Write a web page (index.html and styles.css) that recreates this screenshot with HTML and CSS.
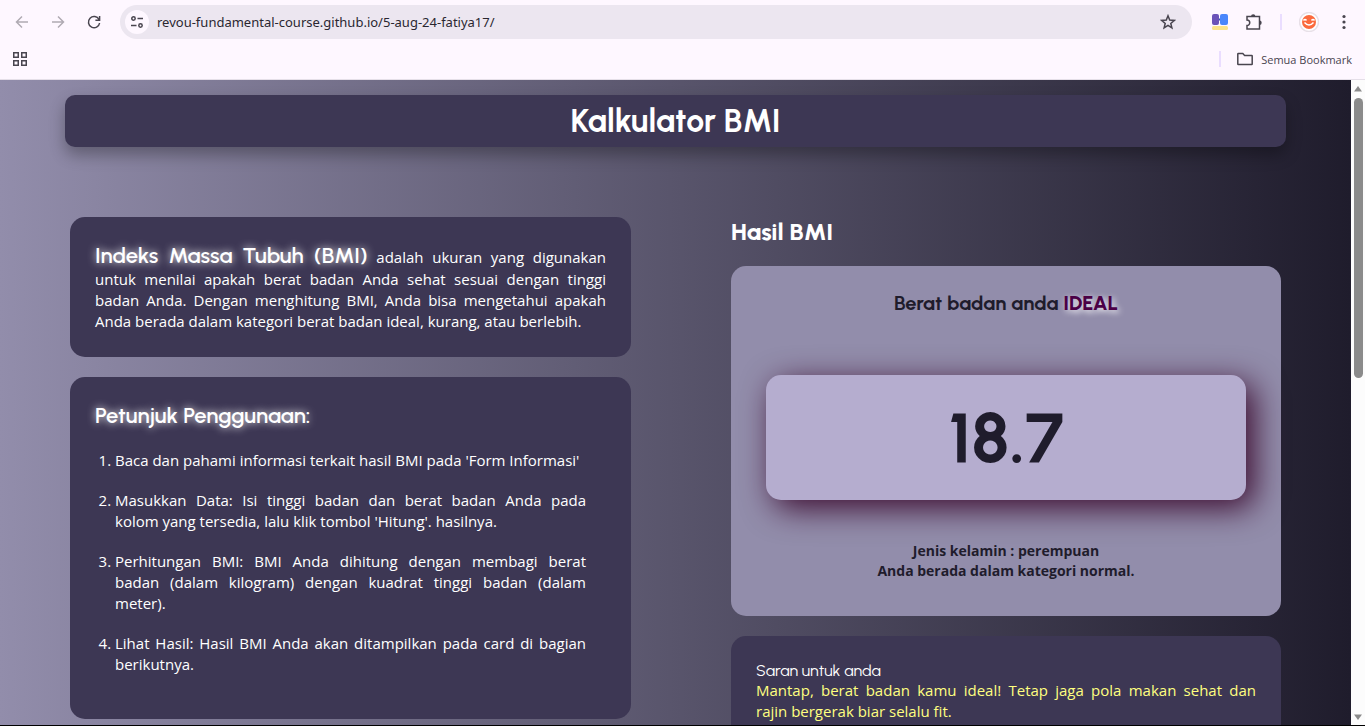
FILE: index.html
```html
<!DOCTYPE html>
<html lang="id">
<head>
    <meta charset="UTF-8">
    <meta name="viewport" content="width=device-width, initial-scale=1.0">
    <title>Kalkulator BMI</title>
    <link rel="stylesheet" href="styles.css">
</head>
<body>
<!-- browser bar -->
<div class="browser">
    <div class="toolbar">
        <button class="nav-btn off" aria-label="Kembali">
            <svg viewBox="0 0 16 16" width="16" height="16"><path d="M14 8H3M8 2.500L2.500 8L8 13.500"/></svg>
        </button>
        <button class="nav-btn off" aria-label="Maju">
            <svg viewBox="0 0 16 16" width="16" height="16"><path d="M2 8H13M8 2.500L13.500 8L8 13.500"/></svg>
        </button>
        <button class="nav-btn" aria-label="Muat ulang">
            <svg viewBox="0 0 16 16" width="16" height="16"><path d="M13 5.500A5.600 5.600 0 1 0 13.600 9M13.600 2V6.200H9.400"/></svg>
        </button>
        <div class="address">
            <button class="site-btn" aria-label="Info situs">
                <svg viewBox="0 0 16 16" width="16" height="16"><circle cx="4.500" cy="4.500" r="1.700"/><path d="M8.500 4.500H14M2 11.500H7.500"/><circle cx="11.500" cy="11.500" r="1.700"/></svg>
            </button>
            <input class="url" type="text" aria-label="Alamat" value="revou-fundamental-course.github.io/5-aug-24-fatiya17/">
            <button class="star-btn" aria-label="Bookmark">
                <svg viewBox="0 0 16 16" width="16" height="16"><path d="M8 1.800L9.700 6.100L14.300 6.400L10.800 9.400L11.900 13.900L8 11.400L4.100 13.900L5.200 9.400L1.700 6.400L6.300 6.100Z"/></svg>
            </button>
        </div>
        <div class="tools">
            <button class="tool-btn" aria-label="Ekstensi 1">
                <svg class="plain" viewBox="0 0 16 16" width="16" height="16"><rect y="12" width="16" height="4" rx="1.500" fill="#fbe38a"/><path d="M6 4.500H10V6.500H6Z" fill="#3b56a8"/><rect width="7" height="11" rx="2" fill="#6b53b8"/><rect x="8" width="8" height="11" rx="2" fill="#4a86fb"/></svg>
            </button>
            <button class="tool-btn" aria-label="Ekstensi">
                <svg viewBox="0 0 18 18" width="18" height="18"><path d="M2 3.500H14.500V16H2V12.500A2.600 2.600 0 0 0 2 7Z"/><path class="fill" d="M6 3.500a2.200 2.200 0 0 1 4.400 0zM14.500 7.500a2.200 2.200 0 0 1 0 4.400z"/></svg>
            </button>
            <span class="split"></span>
            <button class="tool-btn" aria-label="Profil">
                <svg class="plain" viewBox="0 0 20 20" width="20" height="20"><circle cx="10" cy="10" r="9.500" fill="#fff" stroke="#e8e0e8"/><circle cx="10" cy="10" r="7" fill="#fb6a3d"/><path d="M4.500 8.500Q6 6.500 7.500 8.500M12.500 8.500Q14 6.500 15.500 8.500M5.500 10.500Q10 15.500 14.500 10.500" fill="none" stroke="#fff"/></svg>
            </button>
            <button class="tool-btn" aria-label="Menu">
                <svg class="plain" viewBox="0 0 16 16" width="16" height="16"><g fill="#49454f"><circle cx="8" cy="2.500" r="1.600"/><circle cx="8" cy="8" r="1.600"/><circle cx="8" cy="13.500" r="1.600"/></g></svg>
            </button>
        </div>
    </div>
    <div class="bookmarks">
        <button class="tool-btn" aria-label="Aplikasi">
            <svg viewBox="0 0 16 16" width="16" height="16"><path d="M1.750 1.750H6.250V6.250H1.750ZM9.750 1.750H14.250V6.250H9.750ZM1.750 9.750H6.250V14.250H1.750ZM9.750 9.750H14.250V14.250H9.750Z"/></svg>
        </button>
        <div class="all-bookmarks">
            <span class="split"></span>
            <button class="folder-btn">
                <svg viewBox="0 0 18 16" width="18" height="16"><path d="M1.800 13V3Q1.800 2.500 2.300 2.500H6.800L8.600 4.400H15.700Q16.200 4.400 16.200 4.900V13Q16.200 13.500 15.700 13.500H2.300Q1.800 13.500 1.800 13Z"/></svg>
                Semua Bookmark
            </button>
        </div>
    </div>
</div>
<!-- browser bar -->

<div class="window">
    <div class="page">
        <header class="header">
            <h1>Kalkulator BMI</h1>
        </header>

        <main class="container">
            <section class="info">
                <div class="card">
                    <p><span class="glow">Indeks Massa Tubuh (BMI)</span> adalah ukuran yang digunakan untuk menilai apakah berat badan Anda sehat sesuai dengan tinggi badan Anda. Dengan menghitung BMI, Anda bisa mengetahui apakah Anda berada dalam kategori berat badan ideal, kurang, atau berlebih.</p>
                </div>
                <div class="card">
                    <h2 class="glow">Petunjuk Penggunaan:</h2>
                    <ol class="steps">
                        <li>Baca dan pahami informasi terkait hasil BMI pada 'Form Informasi'</li>
                        <li>Masukkan Data: Isi tinggi badan dan berat badan Anda pada kolom&nbsp;yang tersedia, lalu klik tombol 'Hitung'. hasilnya.</li>
                        <li>Perhitungan BMI: BMI Anda dihitung dengan membagi berat badan&nbsp;(dalam kilogram) dengan kuadrat tinggi badan (dalam meter).</li>
                        <li>Lihat Hasil: Hasil BMI Anda akan ditampilkan pada card di bagian berikutnya.</li>
                    </ol>
                </div>
            </section>

            <section class="result">
                <h2 class="result-title">Hasil BMI</h2>
                <div class="result-card">
                    <h3>Berat badan anda <span class="status">IDEAL</span></h3>
                    <div class="score">18.7</div>
                    <p class="detail">Jenis kelamin : perempuan<br>Anda berada dalam kategori normal.</p>
                </div>
                <div class="card">
                    <h4>Saran untuk anda</h4>
                    <p class="advice">Mantap, berat badan kamu ideal! Tetap jaga pola makan sehat dan rajin bergerak biar selalu fit.</p>
                </div>
            </section>
        </main>
    </div>

    <div class="scrollbar">
        <svg viewBox="0 0 10 8" width="10" height="8"><path d="M5 1L9 6.500H1Z"/></svg>
        <div class="thumb"></div>
        <svg class="down" viewBox="0 0 10 8" width="10" height="8"><path d="M5 7L9 1.500H1Z"/></svg>
    </div>
</div>
</body>
</html>
```
FILE: styles.css
```css
* {
    padding: 0;
    margin: 0;
    box-sizing: border-box;
}

body {
    display: flex;
    flex-direction: column;
    height: 100vh;
    overflow: hidden;
    font-family: "Segoe UI", "Open Sans", sans-serif;
    font-size: 15px;
    line-height: 21px;
    color: white;
}

h1, h2, h3, h4, .glow, .score {
    font-family: Urbanist, Lato, sans-serif;
}

button {
    display: flex;
    align-items: center;
    justify-content: center;
    border: 0;
    background: none;
    font: inherit;
    color: #49454f;
}

/* browser bar */
.browser {
    flex: none;
    height: 80px;
    background: #fef7ff;
    border-bottom: 1px solid #e5dfe8;
}

.browser svg {
    fill: none;
    stroke: #49454f;
    stroke-width: 1.5;
}

.browser .plain {
    stroke: none;
}

.browser .fill {
    fill: #49454f;
    stroke: none;
}

.toolbar {
    display: flex;
    align-items: center;
    height: 44px;
    padding: 0 13px 0 4px;
}

.nav-btn {
    width: 36px;
    height: 36px;
}

.off svg {
    stroke: #b0aab3;
}

.address {
    display: flex;
    flex: 1;
    align-items: center;
    height: 34px;
    margin-left: 8px;
    padding: 0 16px 0 5px;
    border-radius: 17px;
    background: #ece6f0;
}

.site-btn {
    width: 24px;
    height: 24px;
    border-radius: 50%;
    background: #fef7ff;
}

.url {
    flex: 1;
    min-width: 0;
    margin-left: 8px;
    border: 0;
    outline: 0;
    background: none;
    font-family: "Segoe UI", "Noto Sans", sans-serif;
    font-size: 13px;
    color: #2a2730;
}

.tools {
    display: flex;
    align-items: center;
    gap: 17px;
    margin-left: 20px;
}

.split {
    width: 2px;
    height: 16px;
    background: #eaddff;
}

.bookmarks {
    display: flex;
    align-items: center;
    justify-content: space-between;
    height: 30px;
    padding: 0 13px 0 12px;
}

.all-bookmarks {
    display: flex;
    align-items: center;
    gap: 15px;
}

.folder-btn {
    gap: 7px;
    font-size: 11px;
}

/* page */
.window {
    display: flex;
    flex: 1;
    min-height: 0;
    border-bottom: 1px solid black;
}

.page {
    flex: 1;
    padding: 15px 65px 0;
    overflow: hidden;
    background: linear-gradient(to right, #928dab, #1f1c2c);
}

.header {
    padding: 6px;
    border-radius: 10px;
    background: #3d3754;
    box-shadow: 0 8px 16px rgba(0, 0, 0, 0.3);
    text-align: center;
}

.header h1 {
    font-size: 32px;
    line-height: 40px;
}

.container {
    display: flex;
    gap: 100px;
    padding: 70px 5px 0;
}

.info {
    flex: 51;
}

.result {
    flex: 50;
}

.card {
    margin-bottom: 20px;
    padding: 25px;
    border-radius: 15px;
    background: #3d3754;
    text-align: justify;
}

.glow {
    font-size: 22px;
    font-weight: 600;
    line-height: 27px;
    text-shadow: 0 0 8px white;
}

.steps {
    padding: 21px 20px 0;
}

.steps li {
    margin-bottom: 19px;
}

.result-title {
    margin-bottom: 20px;
    font-size: 24px;
    font-weight: 800;
    line-height: 29px;
}

.result-card {
    margin-bottom: 20px;
    padding: 25px 35px 35px;
    border-radius: 15px;
    background: #928dab;
    color: #1f1c2c;
    text-align: center;
}

.result-card h3 {
    font-size: 20px;
    line-height: 24px;
}

.status {
    color: #4b0046;
    font-weight: 800;
    text-shadow: 2px 2px 6px white;
}

.score {
    margin: 60px 0 40px;
    padding: 20px;
    border-radius: 15px;
    background: #b5adcf;
    box-shadow: 8px 8px 32px #3b0a2e;
    font-size: 70px;
    font-weight: bold;
    line-height: 85px;
}

.detail {
    padding-top: 1px;
    font-size: 14px;
    font-weight: bold;
    line-height: 20px;
}

.card h4 {
    font-size: 16px;
    font-weight: normal;
    line-height: 19px;
}

.advice {
    color: #ffff80;
}

/* scrollbar */
.scrollbar {
    display: flex;
    flex: none;
    flex-direction: column;
    align-items: center;
    width: 14px;
    padding: 5px 0 4px;
    background: #fcfcfc;
}

.scrollbar svg {
    fill: #8b8b8b;
}

.thumb {
    width: 9px;
    height: 44%;
    margin-top: 5px;
    border-radius: 5px;
    background: #8b8b8b;
}

.down {
    margin-top: auto;
}
```
